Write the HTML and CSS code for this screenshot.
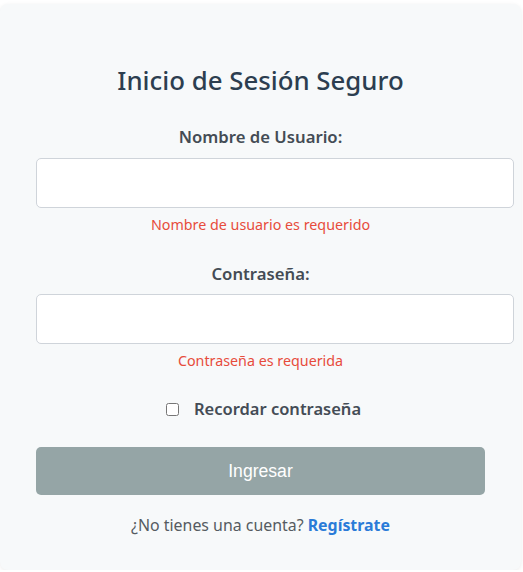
FILE: index.html
```html
<!DOCTYPE html>
<html lang="es">
<head>
<meta charset="utf-8">
<title>Inicio de Sesión Seguro</title>
<link rel="stylesheet" href="styles.css">
</head>
<body>
<div class="card">
  <h1 class="title">Inicio de Sesión Seguro</h1>
  <form class="form">
    <label class="field-label" for="user">Nombre de Usuario:</label>
    <input class="field-input" id="user" type="text">
    <div class="error">Nombre de usuario es requerido</div>

    <label class="field-label second" for="pass">Contraseña:</label>
    <input class="field-input" id="pass" type="password">
    <div class="error">Contraseña es requerida</div>

    <label class="remember"><input type="checkbox" class="remember-box"><span>Recordar contraseña</span></label>

    <button type="button" class="submit">Ingresar</button>

    <p class="footer">¿No tienes una cuenta? <a class="register" href="#">Regístrate</a></p>
  </form>
</div>
</body>
</html>
```
FILE: styles.css
```css
html, body {
  margin: 0;
  padding: 0;
  background: #ffffff;
}
body {
  font-family: "Noto Sans", "Open Sans", sans-serif;
}
.card {
  box-sizing: border-box;
  width: 521px;
  margin-top: 4px;
  padding: 59px 36px 34px;
  background: #f7f9fa;
  border-radius: 8px;
  box-shadow: 0 1px 4px rgba(0, 0, 0, 0.08);
}
.title {
  margin: 0;
  font-size: 25.8px;
  line-height: 34px;
  font-weight: 500;
  color: #2c3e50;
  text-align: center;
}
.form {
  display: flex;
  flex-direction: column;
  margin-top: 28px;
}
.field-label {
  font-size: 16.7px;
  line-height: 24px;
  font-weight: 600;
  color: #444c55;
  text-align: center;
  margin-bottom: 9px;
}
.field-label.second {
  margin-top: 27px;
  margin-bottom: 8px;
}
.field-input {
  box-sizing: border-box;
  width: 478px;
  height: 50px;
  margin: 0;
  border: 1px solid #cfd4da;
  border-radius: 5px;
  background: #ffffff;
  font-size: 16px;
  padding: 0 12px;
}
.error {
  margin-top: 7px;
  font-size: 14.3px;
  line-height: 20px;
  color: #e74c3c;
  text-align: center;
}
.remember {
  display: flex;
  align-items: center;
  justify-content: center;
  margin-top: 26px;
  font-size: 16.5px;
  line-height: 24px;
  font-weight: 600;
  color: #444c55;
}
.remember-box {
  width: 13px;
  height: 13px;
  margin: 0 15px 0 6px;
}
.submit {
  box-sizing: border-box;
  width: 449px;
  height: 48px;
  margin-top: 26px;
  border: none;
  border-radius: 5px;
  background: #95a5a6;
  color: #ffffff;
  font-family: "Liberation Sans", Arial, sans-serif;
  font-size: 17.6px;
}
.footer {
  margin: 19px 0 0;
  font-size: 15.9px;
  line-height: 22px;
  color: #555b61;
  text-align: center;
}
.register {
  color: #2a7bd8;
  font-weight: 700;
  text-decoration: none;
}
```
